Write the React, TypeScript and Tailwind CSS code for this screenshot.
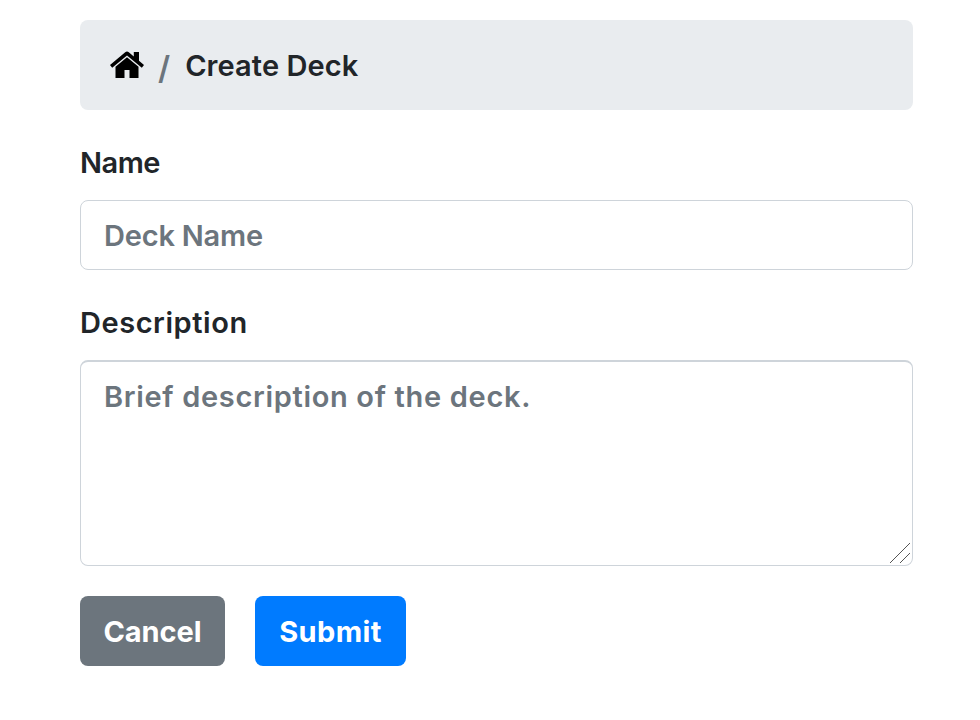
export default function App() {
  return (
    <main className="min-h-[720px] bg-white pt-5 pl-20 font-['Inter',sans-serif] text-[29px] leading-[45px] font-semibold text-[#212529]">
      <div className="w-[833px]">
        <nav className="flex h-[90px] items-center rounded-[8px] bg-[#e9ecef] pl-[30px]">
          <svg className="h-7 w-[34px] text-black" viewBox="0 0 34 28" fill="currentColor" aria-label="Home">
            <path d="M0 14 15.2 1.2Q17 -.2 18.8 1.2L23.8 5.4V1H29V9.8L34 14 31.8 16.7 17 4.4 2.2 16.7Z" />
            <path d="M5.5 15.8 17 6.3 28.5 15.8V27H19.5V19H14.5V27H5.5Z" />
          </svg>
          <span className="ml-[14px] mt-1 text-[32px] font-semibold text-[#6c757d]">/</span>
          <span className="ml-[15px] tracking-[0.1px]">Create Deck</span>
        </nav>
        <form>
          <label htmlFor="name" className="mt-[30px] block h-[60px] tracking-[-0.5px]">Name</label>
          <input id="name" placeholder="Deck Name" className="block h-[70px] w-full rounded-[8px] border border-[#ced4da] px-[23px] tracking-[-0.2px] outline-none placeholder:text-[#6c757d] placeholder:opacity-100" />
          <label htmlFor="description" className="mt-[30px] block h-[60px] tracking-[0.55px]">Description</label>
          <div className="relative">
            <textarea id="description" placeholder="Brief description of the deck." className="block h-[206px] w-full resize-none rounded-[8px] border border-t-2 border-[#ced4da] px-[23px] pt-[12px] tracking-[0.67px] outline-none placeholder:text-[#6c757d] placeholder:opacity-100" />
            <svg className="absolute right-[2px] bottom-[2px] size-[21px]" viewBox="0 0 21 21" fill="none" stroke="#555" strokeWidth="1" aria-hidden="true">
              <path d="M0 20 20 0M10 20 20 10" />
            </svg>
          </div>
          <div className="mt-[30px] flex gap-[30px] font-bold text-white">
            <button type="button" className="h-[70px] w-[145px] rounded-[8px] bg-[#6c757d] tracking-[-0.1px]">Cancel</button>
            <button type="submit" className="h-[70px] w-[151px] rounded-[8px] bg-[#007bff] tracking-[0.4px]">Submit</button>
          </div>
        </form>
      </div>
    </main>
  );
}
